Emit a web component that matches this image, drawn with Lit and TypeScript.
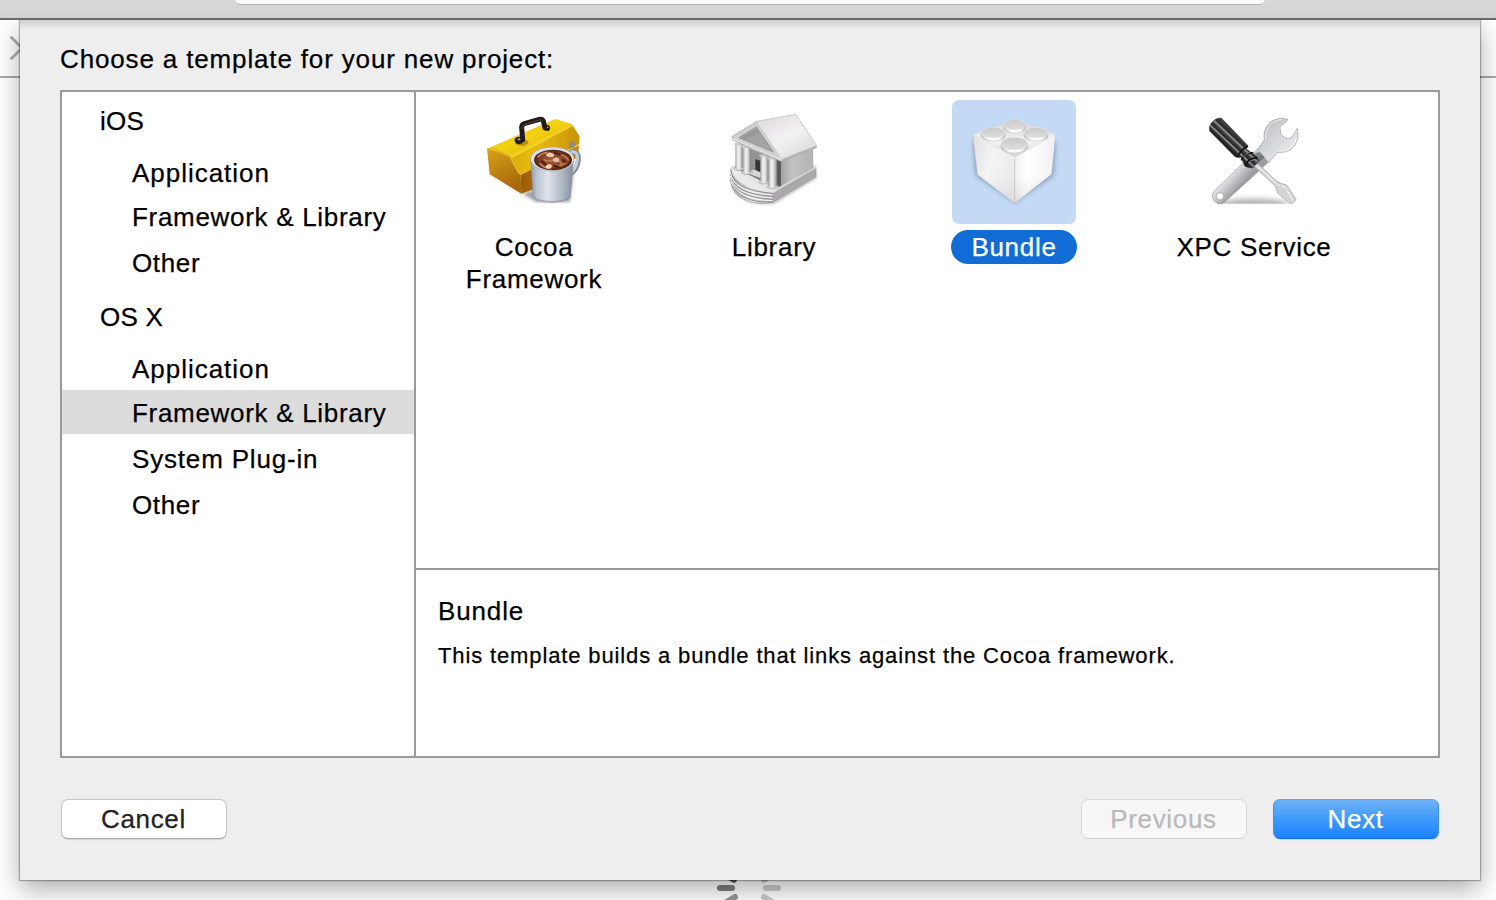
import { LitElement, html, css, svg, nothing } from "lit";
import { customElement, property, state } from "lit/decorators.js";
import { classMap } from "lit/directives/class-map.js";

const toolbox = html`
  <svg viewBox="6 12 372 372" width="124" height="124">
    <defs>
      <linearGradient id="lid" x1="0" y1="0" x2="1" y2="1">
        <stop offset="0" stop-color="#ecd022" /><stop offset=".5" stop-color="#f3d011" /><stop offset="1" stop-color="#d9a80c" />
      </linearGradient>
      <linearGradient id="end" x1="0" y1="0" x2="0.3" y2="1">
        <stop offset="0" stop-color="#d9a61a" /><stop offset="1" stop-color="#a8670b" />
      </linearGradient>
      <linearGradient id="front" x1="0" y1="0" x2="1" y2="0">
        <stop offset="0" stop-color="#9c5c08" /><stop offset="1" stop-color="#c98a10" />
      </linearGradient>
      <linearGradient id="slope" x1="0" y1="0" x2="1" y2="0">
        <stop offset="0" stop-color="#dcab08" /><stop offset=".35" stop-color="#e9bd10" /><stop offset="1" stop-color="#c7930a" />
      </linearGradient>
      <linearGradient id="mug" x1="0" y1="0" x2="1" y2="0">
        <stop offset="0" stop-color="#8f98a5" /><stop offset=".14" stop-color="#bcc4cf" /><stop offset=".4" stop-color="#dfe4eb" />
        <stop offset=".72" stop-color="#b0b9c6" /><stop offset="1" stop-color="#848e9c" />
      </linearGradient>
      <radialGradient id="cocoa">
        <stop offset="0" stop-color="#a25f3a" /><stop offset=".65" stop-color="#844424" /><stop offset="1" stop-color="#4d210f" />
      </radialGradient>
      <filter id="soft1" x="-30%" y="-30%" width="160%" height="160%"><feGaussianBlur stdDeviation="5" /></filter>
      <filter id="tiny" x="-20%" y="-20%" width="140%" height="140%"><feGaussianBlur stdDeviation="2" /></filter>
    </defs>
    <path d="M56 232 154 294 310 236 300 318 198 318Z" fill="#000" opacity=".35" filter="url(#soft1)" />
    <path d="M51 158 76 152 121 179 152 236 154 293 59 235Z" fill="url(#end)" />
    <path d="M152 236 327 147 325 181 190 280 154 293Z" fill="url(#front)" />
    <path d="M51 158 256 69 305 84 127 179Z" fill="url(#lid)" />
    <path d="M51 158 70 154 121 179 152 236 145 233 118 184 74 161Z" fill="#e3bb1c" />
    <path d="M121 179 305 84 329 121 327 145 152 237Z" fill="url(#slope)" />
    <path d="M121 179 305 84 309 90 126 186Z" fill="#f5d92e" opacity=".8" />
    <path d="M299 140q8-8 14-3v16l-14 4Z" fill="#8f9088" stroke="#7e7456" />
    <ellipse cx="155" cy="139" rx="20" ry="10" fill="#8a690b" opacity=".6" />
    <path d="M158 131 155 94Q155 86 163 83L208 70Q217 68 220 75L225 96" fill="none" stroke="#211a17" stroke-width="15" stroke-linecap="round" stroke-linejoin="round" />
    <path d="M156 101Q155 90 163 86L209 71Q215 70 217 78" fill="none" stroke="#5a443a" stroke-width="3" />
    <ellipse cx="147" cy="133" rx="13" ry="11" fill="#1c1a1c" /><ellipse cx="232" cy="96" rx="8" ry="9" fill="#1c1a1c" />
    <circle cx="147" cy="130" r="4" fill="#8a8788" /><circle cx="233" cy="94" r="2.500" fill="#aaa" />
    <path d="M302 169Q327 163 325 193 322 220 300 236" fill="none" stroke="#828c9a" stroke-width="15" />
    <path d="M302 168Q325 163 322 192 319 218 300 232" fill="none" stroke="#c6ced8" stroke-width="9" />
    <path d="M182 186 189 301C194 325 296 325 301 301L311 186Z" fill="url(#mug)" stroke="#838c98" stroke-width="1.5" />
    <path d="M191 300C200 322 290 322 300 300" stroke="#727d8b" stroke-width="3" fill="none" opacity=".55" />
    <ellipse cx="247" cy="189" rx="65" ry="36" fill="#dce2ea" stroke="#9ea8b4" stroke-width="2" />
    <ellipse cx="249" cy="192" rx="57" ry="31" fill="url(#cocoa)" />
    <g filter="url(#tiny)">
      <path d="M203 184q12-14 30-15M209 202q10 14 33 16M275 176q20 9 20 18M265 210q16-2 26-12M221 190q14 9 28 2t26 12" stroke="#c97e52" stroke-width="5" fill="none" />
      <path d="M213 194q8 4 16 14M251 172q13-1 19 5M252 207q8 8 17 5M276 190l12 10" stroke="#45180b" stroke-width="5" fill="none" />
    </g>
    <path d="M229 174 239 169 253 174 251 182 239 184 229 180Z" fill="#e8c9b4" /><path d="M249 188 260 184 268 188 266 198 255 199 249 195Z" fill="#e2bea6" />
    <path d="M227 209 237 204 246 208 244 216 234 218 227 215Z" fill="#edd2c0" />
  </svg>`;

const column = (x: number, top: number, bottom: number, w: number) => svg`
  <ellipse cx=${x + w / 2} cy=${bottom + 1} rx=${w / 2 + 5} ry="6" fill="#d9d7d9" stroke="#868486" stroke-width="1.2" />
  <path d="M${x} ${top}V${bottom}q${w / 2} 7 ${w} 0V${top}Z" fill="url(#col)" />
  <path d="M${x - 3} ${top}h${w + 6}v6h${-w - 6}Z" fill="#c9c7c9" />`;

const library = html`
  <svg viewBox="6 12 372 372" width="124" height="124">
    <defs>
      <linearGradient id="roof" x1="0" y1="0" x2=".8" y2="1">
        <stop offset="0" stop-color="#d9d7da" /><stop offset=".55" stop-color="#f3f2f3" /><stop offset="1" stop-color="#dcdadc" />
      </linearGradient>
      <linearGradient id="wall" x1="0" y1="0" x2="1" y2="0">
        <stop offset="0" stop-color="#a3a1a3" /><stop offset=".35" stop-color="#c4c2c4" /><stop offset="1" stop-color="#b3b1b3" />
      </linearGradient>
      <linearGradient id="col" x1="0" y1="0" x2="1" y2="0">
        <stop offset="0" stop-color="#a9a7a9" /><stop offset=".35" stop-color="#f4f3f4" /><stop offset=".65" stop-color="#dcdadc" /><stop offset="1" stop-color="#858385" />
      </linearGradient>
      <linearGradient id="stair" x1="0" y1="0" x2="1" y2="0">
        <stop offset="0" stop-color="#aaa8aa" /><stop offset=".5" stop-color="#e3e1e3" /><stop offset="1" stop-color="#b5b3b5" />
      </linearGradient>
      <filter id="soft2" x="-30%" y="-30%" width="160%" height="160%"><feGaussianBlur stdDeviation="4" /></filter>
    </defs>
    <path d="M62 240Q58 312 150 324L192 324 320 246 316 210Z" fill="#000" opacity=".25" filter="url(#soft2)" />
    <path d="M61 230Q58 280 88 302 128 331 188 319L192 290 64 213Z" fill="url(#stair)" stroke="#8b898b" stroke-width="1.5" />
    <path d="M188 291 318 215 318 243 188 319Z" fill="#aaa8aa" stroke="#919091" />
    <path d="M64 213 76 207 200 276 317 208 318 216 188 292Z" fill="#dbd9db" />
    <path d="M63 214Q66 272 188 292L64 214Z" fill="#ebe9eb" />
    <path d="M64 214 76 207 202 276 188 292Z" fill="#e6e4e6" />
    <g fill="none" stroke="#8e8c8e" stroke-width="3">
      <path d="M62 222Q66 282 188 292" /><path d="M61 233Q67 294 188 301" /><path d="M62 246Q74 304 188 310" /><path d="M65 264Q90 321 188 318" />
    </g>
    <g fill="none" stroke="#f7f6f7" stroke-width="3">
      <path d="M61 227Q66 288 188 297" /><path d="M61 240Q70 299 188 306" /><path d="M63 256Q84 312 188 314" />
    </g>
    <path d="M79 142 214 196 214 270 196 276 80 218Z" fill="#777577" />
    <path d="M120 158 168 177 165 232 119 222Z" fill="#959395" /><path d="M136 190 152 194V230L136 222Z" fill="#373537" />
    <path d="M119 223 136 222 160 233 150 246 116 233Z" fill="#d5d3d5" />
    <path d="M198 192 214 194 214 268 202 273Z" fill="#5c5a5c" />
    <path d="M213 194 309 156 310 217 213 270Z" fill="url(#wall)" />
    ${column(76, 142, 216, 23)} ${column(99, 150, 228, 23)} ${column(151, 176, 257, 24)} ${column(175, 184, 271, 26)}
    <path d="M67 121 140 76 218 188 214 197 68 132Z" fill="#d0ced0" stroke="#908e90" stroke-width="1.5" />
    <path d="M87 125 139 93 190 168Z" fill="#a5a3a5" stroke="#858385" stroke-width="2" />
    <path d="M96 124 139 98 148 111 106 131Z" fill="#8f8d8f" opacity=".5" />
    <path d="M68 128 214 191" stroke="#efedef" stroke-width="3" />
    <path d="M140 76 257 55 320 149 217 190Z" fill="url(#roof)" stroke="#a5a3a5" stroke-width="1.5" />
    <path d="M217 190 320 149 320 156 214 198Z" fill="#b3b1b3" />
    <path d="M141 77 217 190" stroke="#fff" stroke-width="2" opacity=".8" />
  </svg>`;

const stud = (x: number, y: number, rx: number, ry: number) => svg`
  <path d="M${x - rx} ${y}v9a${rx} ${ry} 0 0 0 ${rx * 2} 0v-9Z" fill="url(#rim)" stroke="#a8a8a8" stroke-width="1.2" />
  <ellipse cx=${x} cy=${y} rx=${rx} ry=${ry} fill="url(#stud)" stroke="#f2f2f2" stroke-width="1.2" />`;

const brick = html`
  <svg viewBox="36 24 372 372" width="124" height="124">
    <defs>
      <linearGradient id="bl" x1="0" y1="0" x2="1" y2=".4">
        <stop offset="0" stop-color="#dedede" /><stop offset=".5" stop-color="#f4f4f4" /><stop offset="1" stop-color="#ececec" />
      </linearGradient>
      <linearGradient id="br" x1="0" y1="0" x2="1" y2="0">
        <stop offset="0" stop-color="#f0f0f0" /><stop offset=".3" stop-color="#fff" /><stop offset="1" stop-color="#f0f0f0" />
      </linearGradient>
      <linearGradient id="bt" x1="0" y1="0" x2="0" y2="1">
        <stop offset="0" stop-color="#d7d7d7" /><stop offset=".6" stop-color="#f3f3f3" /><stop offset="1" stop-color="#d4d4d4" />
      </linearGradient>
      <linearGradient id="stud" x1="0" y1="0" x2="0" y2="1">
        <stop offset="0" stop-color="#c9c9c9" /><stop offset="1" stop-color="#dedede" />
      </linearGradient>
      <linearGradient id="rim" x1="0" y1="0" x2="1" y2="0">
        <stop offset="0" stop-color="#c2c2c2" /><stop offset=".35" stop-color="#fff" /><stop offset=".75" stop-color="#fafafa" /><stop offset="1" stop-color="#bdbdbd" />
      </linearGradient>
      <linearGradient id="bshade" x1="0" y1="0" x2="0" y2="1">
        <stop offset=".5" stop-color="#bbb" stop-opacity="0" /><stop offset="1" stop-color="#aaa" stop-opacity=".3" />
      </linearGradient>
      <filter id="soft3" x="-30%" y="-30%" width="160%" height="160%"><feGaussianBlur stdDeviation="8" /></filter>
    </defs>
    <path d="M100 150 345 150 340 250 224 330 108 250Z" fill="#35557c" opacity=".5" filter="url(#soft3)" />
    <path d="M98 128 224 84 347 127 224 196Z" fill="url(#bt)" />
    <path d="M98 128 224 196 224 334 112 248Z" fill="url(#bl)" stroke="#a5a5a5" stroke-width="1" />
    <path d="M347 127 224 196 224 334 335 247Z" fill="url(#br)" stroke="#a5a5a5" stroke-width="1" />
    <path d="M104 180 224 250 341 180 335 247 224 334 112 248Z" fill="url(#bshade)" />
    <path d="M99 129 224 197 346 128" stroke="#fff" stroke-width="2" fill="none" />
    <path d="M224 198V332" stroke="#dedede" stroke-width="1.5" />
    ${stud(224, 98, 33, 16)} ${stud(159, 122, 36, 16)} ${stud(288, 122, 36, 16)} ${stud(223, 155, 40, 19)}
  </svg>`;

const tools = html`
  <svg viewBox="6 12 372 372" width="124" height="124">
    <defs>
      <linearGradient id="wr" gradientUnits="userSpaceOnUse" x1="170" y1="180" x2="205" y2="212">
        <stop offset="0" stop-color="#e6e6e8" /><stop offset=".45" stop-color="#c4c5c8" /><stop offset="1" stop-color="#9c9da1" />
      </linearGradient>
      <linearGradient id="wh" x1="0" y1="0" x2="1" y2="1">
        <stop offset="0" stop-color="#b6b7ba" /><stop offset=".5" stop-color="#d8d9dc" /><stop offset="1" stop-color="#f0f0f2" />
      </linearGradient>
      <linearGradient id="hd" gradientUnits="userSpaceOnUse" x1="103" y1="144" x2="137" y2="108">
        <stop offset="0" stop-color="#1c1c1e" /><stop offset=".16" stop-color="#3a3a3c" /><stop offset=".24" stop-color="#a3a3a5" /><stop offset=".33" stop-color="#222" />
        <stop offset=".5" stop-color="#444" /><stop offset=".6" stop-color="#98989a" /><stop offset=".7" stop-color="#262628" /><stop offset="1" stop-color="#4c4c4e" />
      </linearGradient>
      <filter id="soft4" x="-30%" y="-60%" width="160%" height="220%"><feGaussianBlur stdDeviation="8" /></filter>
      <clipPath id="floor"><path d="M0 250H380V323H0Z" /></clipPath>
    </defs>
    <g clip-path="url(#floor)"><ellipse cx="192" cy="325" rx="105" ry="18" fill="#000" opacity=".28" filter="url(#soft4)" /></g>
    <path d="M70 288 204 158 238 196 104 318Q90 329 76 318 61 304 70 288ZM90 290A11 11 0 1 0 90 312 11 11 0 1 0 90 290Z" fill="url(#wr)" fill-rule="evenodd" stroke="#808185" stroke-width="1.5" />
    <path d="M204 160 223 131C218 101 235 66 281 67L294 71 270 94 273 117 293 130 306 123 322 97C331 137 309 173 263 169L236 199Z" fill="url(#wh)" />
    <path d="M204 160 223 131C218 101 235 66 281 67L294 71 270 94 273 117 293 130 306 123 322 97C331 137 309 173 263 169L236 199" fill="none" stroke="#8a8b8f" stroke-width="1.6" />
    <path d="M227 130C223 101 241 75 274 70M262 165C292 168 313 151 319 126" fill="none" stroke="#fff" stroke-width="2.5" opacity=".8" />
    <path d="M178 178 208 168 224 184 186 218Z" fill="#222" opacity=".4" />
    <path d="M58 97C60 80 76 65 94 66L174 149Q169 151 169 159L202 184Q209 199 197 211 184 220 165 211L153 184Q140 186 134 181L59 105Z" fill="url(#hd)" stroke="#252527" stroke-width="1.5" />
    <path d="M145 181Q150 162 174 151M154 193Q164 169 190 171M167 209Q171 189 201 185" stroke="#111" stroke-width="5" fill="none" />
    <path d="M159 184Q167 173 179 169M174 202Q180 192 194 190" stroke="#888" stroke-width="3" fill="none" />
    <path d="M192 211 203 202 264 259 290 267 318 310Q313 322 301 323L263 292 256 270Z" fill="#d3d4d6" stroke="#88898c" stroke-width="1.5" />
    <path d="M199 208 262 265 286 274 309 315" stroke="#fafafa" stroke-width="3" fill="none" />
  </svg>`;

interface Row { text: string; kind: "head" | "item" | "item snug"; tracking: number; selected?: boolean }

const rows: Row[] = [
  { text: "iOS", kind: "head", tracking: 0.2 },
  { text: "Application", kind: "item", tracking: 0.97 },
  { text: "Framework & Library", kind: "item snug", tracking: 0.7 },
  { text: "Other", kind: "item", tracking: 0.65 },
  { text: "OS X", kind: "head", tracking: 0.2 },
  { text: "Application", kind: "item", tracking: 0.97 },
  { text: "Framework & Library", kind: "item snug", tracking: 0.7, selected: true },
  { text: "System Plug-in", kind: "item", tracking: 0.82 },
  { text: "Other", kind: "item", tracking: 0.65 },
];

const templates = [
  { lines: ["Cocoa", "Framework"], icon: toolbox },
  { lines: ["Library"], icon: library },
  { lines: ["Bundle"], icon: brick },
  { lines: ["XPC Service"], icon: tools },
];

@customElement("template-tile")
class TemplateTile extends LitElement {
  @property({ attribute: false }) lines: string[] = [];
  @property({ attribute: false }) icon: unknown = nothing;
  @property({ type: Boolean }) selected = false;

  static styles = css`
    :host { display: flex; flex-direction: column; align-items: center; width: 200px; }
    .icon { width: 124px; height: 124px; border-radius: 7px; }
    .icon svg { display: block; }
    .icon.selected { background: #c3d9f4; }
    .label { margin-top: 6px; padding: 1px 20px; border-radius: 17px; line-height: 32px; text-align: center; letter-spacing: 0.7px; white-space: nowrap; }
    .label.selected { background: #116cd6; color: #fff; }
    .line { display: block; }
  `;

  render() {
    const c = { selected: this.selected };
    return html`
      <div class=${classMap({ icon: true, ...c })}>${this.icon}</div>
      <div class=${classMap({ label: true, ...c })}>${this.lines.map((l) => html`<span class="line">${l}</span>`)}</div>`;
  }
}

@customElement("app-root")
class AppRoot extends LitElement {
  @state() private chosen = 2;

  static styles = css`
    :host { display: block; position: relative; width: 1496px; height: 900px; overflow: hidden; background: #fff;
      font: 26px/32px "Liberation Sans", Arial, sans-serif; color: #000; -webkit-text-stroke: 0.25px currentColor; }
    * { box-sizing: border-box; }
    .toolbar { height: 20px; background: linear-gradient(#d8d8d8, #d2d2d2); border-bottom: 2px solid #6b6a6b; display: flex; justify-content: center; padding-left: 4px; }
    .status { width: 1030px; height: 5px; background: #fbfbfb; border-radius: 0 0 8px 8px; border-bottom: 1px solid #b5b5b5; }
    .jumpbar { height: 58px; border-bottom: 2px solid #a8a8a8; padding: 15px 0 0 10px; }
    .chevron { display: block; }
    .spinner { position: absolute; left: 714px; top: 848px; }
    .sheet { position: absolute; left: 20px; top: 20px; width: 1460px; height: 860px; background: #eee; padding: 23px 40px 0;
      display: flex; flex-direction: column; box-shadow: 0 0 1px 1px rgba(0,0,0,.28), 0 9px 24px rgba(0,0,0,.33);
      clip-path: inset(0 -60px -60px -60px); }
    .fade { position: absolute; left: 0; right: 0; top: 0; height: 8px; background: linear-gradient(#cfcfcf, #e8e8e8); }
    .title { letter-spacing: 0.85px; height: 47px; white-space: nowrap; }
    .browser { display: flex; height: 668px; border: 2px solid #999; background: #fff; }
    .sidebar { width: 354px; border-right: 2px solid #999; padding-top: 6px; white-space: nowrap; }
    .row { height: 44px; line-height: 44px; padding-top: 1px; }
    .head { padding-left: 38px; margin-bottom: 8px; }
    .item { padding-left: 70px; }
    .snug { margin-bottom: 2px; }
    .snug + .item { margin-bottom: 2px; }
    .item + .head { margin-top: 10px; }
    .item:has(+ .head) { margin-bottom: 0; }
    .row.selected { background: #dcdcdc; }
    .main { flex: 1; display: flex; flex-direction: column; }
    .gallery { height: 478px; border-bottom: 2px solid #999; padding: 8px 0 0 18px; display: flex; gap: 40px; align-items: flex-start; }
    .detail { padding: 25px 22px; letter-spacing: 0.87px; }
    .text { font-size: 22px; line-height: 28px; margin-top: 15px; white-space: nowrap; }
    .buttons { display: flex; gap: 26px; margin-top: 41px; padding: 0 1px; }
    .button { width: 166px; height: 40px; border-radius: 7px; line-height: 38px; text-align: center; letter-spacing: 0.65px; padding-right: 1px;
      border: 1px solid #c6c6c6; border-bottom-color: #acacac; background: #fff; color: #222; box-shadow: 0 1px 1px rgba(0,0,0,.1); }
    .cancel { margin-right: auto; }
    .disabled { background: #f7f7f7; color: #b9b9b9; border-color: #dadada; border-bottom-color: #cecece; box-shadow: none; }
    .primary { background: linear-gradient(#6fb3f8, #3f9bfa 50%, #1a82ff); border-color: #5ea5ee #3d8ff4 #1068f0; color: #fff; }
  `;

  render() {
    return html`
      <div class="toolbar"><div class="status"></div></div>
      <div class="jumpbar">
        <svg class="chevron" width="16" height="26" viewBox="0 0 16 26"><path d="M1.5 2.5 12 13 1.5 23.5" fill="none" stroke="#aaa" stroke-width="2.6" stroke-linecap="round" /></svg>
      </div>
      <svg class="spinner" width="70" height="80" viewBox="714 848 70 80">
        <g stroke-width="6" stroke-linecap="round">
          <path d="M720 888h12" stroke="#7d7d7d" /><path d="M725 903l10-6" stroke="#969696" />
          <path d="M724 874l10 5.5" stroke="#4c4c4c" /><path d="M766 888h12" stroke="#cbcbcb" />
          <path d="M764 897l10 6" stroke="#cbcbcb" /><path d="M764 879.500l10-5.500" stroke="#c4c4c4" />
        </g>
      </svg>
      <div class="sheet">
        <div class="fade"></div>
        <div class="title">Choose a template for your new project:</div>
        <div class="browser">
          <div class="sidebar">
            ${rows.map((r) => html`<div class="row ${r.kind} ${r.selected ? "selected" : ""}" style="letter-spacing:${r.tracking}px">${r.text}</div>`)}
          </div>
          <div class="main">
            <div class="gallery">
              ${templates.map((t, i) => html`<template-tile .lines=${t.lines} .icon=${t.icon} ?selected=${i === this.chosen} @click=${() => (this.chosen = i)}></template-tile>`)}
            </div>
            <div class="detail">
              <div>Bundle</div>
              <div class="text">This template builds a bundle that links against the Cocoa framework.</div>
            </div>
          </div>
        </div>
        <div class="buttons">
          <div class="button cancel">Cancel</div>
          <div class="button disabled">Previous</div>
          <div class="button primary">Next</div>
        </div>
      </div>`;
  }
}
